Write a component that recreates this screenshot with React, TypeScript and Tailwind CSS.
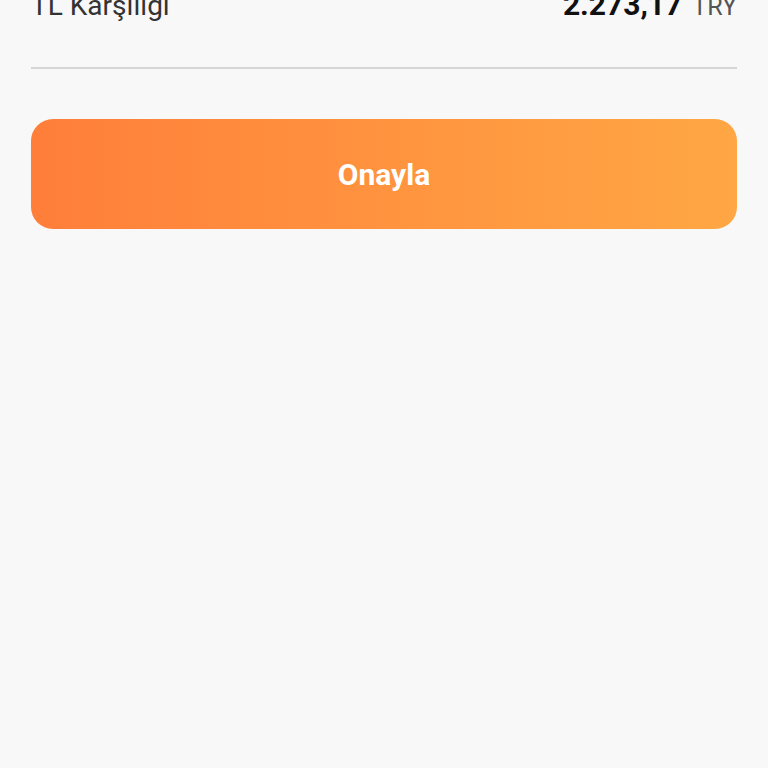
export default function App() {
  return (
    <div className="h-screen overflow-hidden bg-[#f8f8f8] px-[31px] font-['Roboto',sans-serif]">
      {/* Summary row (scrolled partly out of view) */}
      <div className="-mt-[10px] flex items-baseline justify-between leading-[30px]">
        <span className="text-[28px] text-[#333333]">TL Karşılığı</span>
        <span className="flex items-baseline gap-[10px]">
          <span className="text-[30px] font-bold text-[#111111]">2.273,17</span>
          <span className="text-[25px] text-[#555555]">TRY</span>
        </span>
      </div>

      <div className="mt-[45px] h-[2px] bg-[#d6d6d6]" />

      <button className="mt-[50px] flex h-[110px] w-full items-center justify-center rounded-[22px] bg-gradient-to-r from-[#ff7e3a] to-[#ffa744] text-[30px] font-bold text-white">
        Onayla
      </button>
    </div>
  );
}
